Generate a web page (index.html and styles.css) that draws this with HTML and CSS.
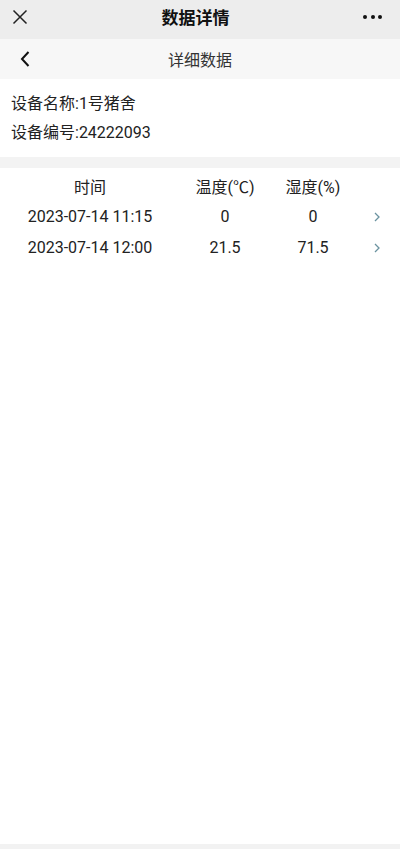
FILE: index.html
```html
<!DOCTYPE html>
<html lang="zh-CN">
<head>
  <meta charset="UTF-8">
  <meta name="viewport" content="width=device-width, initial-scale=1.0">
  <title>数据详情</title>
  <link rel="stylesheet" href="styles.css">
</head>
<body>
  <div class="topbar">
    <span class="close">
      <svg width="16" height="16" viewBox="0 0 16 16"><path d="M1.5 1.5 L14.5 14.5 M14.5 1.5 L1.5 14.5" stroke="#222" stroke-width="1.5" fill="none"/></svg>
    </span>
    <span class="topbar-title">数据详情</span>
    <span class="more"><i></i><i></i><i></i></span>
  </div>

  <div class="navbar">
    <span class="back">
      <svg width="10" height="16" viewBox="0 0 10 16"><path d="M8.5 1 L2 8 L8.5 15" stroke="#111" stroke-width="2" fill="none"/></svg>
    </span>
    <span class="nav-title">详细数据</span>
  </div>

  <div class="info">
    <p>设备名称:1号猪舍</p>
    <p>设备编号:24222093</p>
  </div>

  <div class="gap"></div>

  <div class="main">
    <div class="row head">
      <span>时间</span>
      <span>温度(℃)</span>
      <span>湿度(%)</span>
      <span></span>
    </div>
    <div class="row">
      <span>2023-07-14 11:15</span>
      <span>0</span>
      <span>0</span>
      <span class="arrow"><svg width="6" height="10" viewBox="0 0 6 10"><path d="M1 1 L5 5 L1 9" stroke="#6b93a0" stroke-width="1.3" fill="none"/></svg></span>
    </div>
    <div class="row">
      <span>2023-07-14 12:00</span>
      <span>21.5</span>
      <span>71.5</span>
      <span class="arrow"><svg width="6" height="10" viewBox="0 0 6 10"><path d="M1 1 L5 5 L1 9" stroke="#6b93a0" stroke-width="1.3" fill="none"/></svg></span>
    </div>
  </div>

  <div class="footer"></div>
</body>
</html>
```

FILE: styles.css
```css
body {
  margin: 0;
  font-family: Roboto, "Noto Sans CJK SC", sans-serif;
  color: #222;
  background: #fff;
  min-height: 849px;
  display: flex;
  flex-direction: column;
}

.topbar {
  height: 39px;
  background: #ededed;
  display: flex;
  align-items: center;
  justify-content: space-between;
  padding: 0 18px 0 12px;
}

.close {
  display: flex;
  padding-bottom: 5px;
}

.topbar-title {
  font-size: 17px;
  font-weight: bold;
  color: #111;
  padding-bottom: 7px;
}

.more {
  display: flex;
  gap: 3.5px;
  padding-bottom: 6px;
}

.more i {
  width: 4px;
  height: 4px;
  border-radius: 50%;
  background: #111;
}

.navbar {
  height: 40px;
  background: #f7f7f7;
  display: flex;
  align-items: center;
  position: relative;
}

.back {
  display: flex;
  margin-left: 20px;
}

.nav-title {
  position: absolute;
  left: 0;
  right: 0;
  text-align: center;
  font-size: 16px;
  color: #333;
  pointer-events: none;
}

.info {
  padding: 10px 11px;
}

.info p {
  margin: 0;
  font-size: 16px;
  line-height: 29px;
  color: #222;
}

.gap {
  height: 11px;
  background: #f3f3f3;
}

.main {
  flex: 1;
  padding-top: 2px;
}

.row {
  display: grid;
  grid-template-columns: 180px 90px 86px 1fr;
  height: 31px;
  align-items: center;
  font-size: 16px;
  text-align: center;
  color: #222;
}

.arrow {
  display: flex;
  padding-left: 18px;
}

.footer {
  height: 5px;
  background: #f2f2f2;
}
```
